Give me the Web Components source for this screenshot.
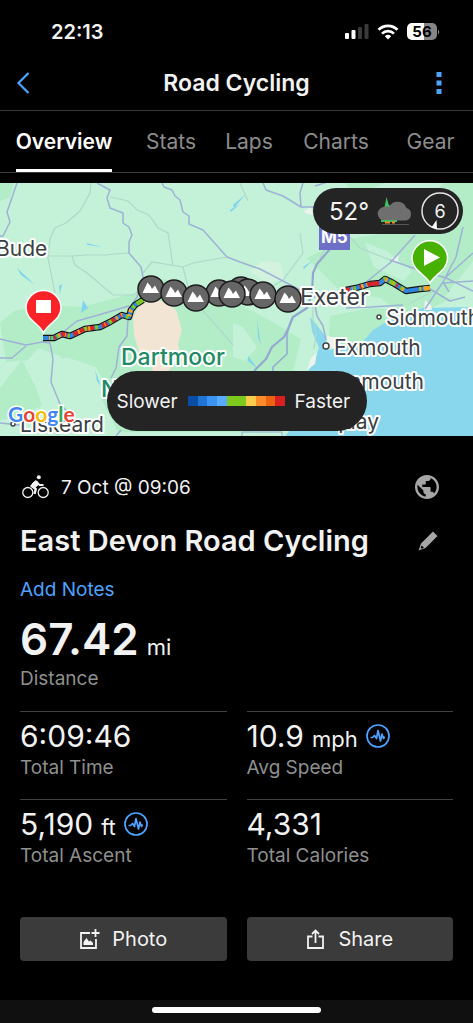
<!DOCTYPE html>
<html lang="en">
<head>
<meta charset="utf-8">
<meta name="viewport" content="width=device-width, initial-scale=1">
<title>Road Cycling</title>
<style>
  body {
    margin: 0;
    background: #000;
    color: #f2f2f2;
    font-family: Inter, "Liberation Sans", sans-serif;
    font-size: 19px;
  }
</style>
</head>
<body>
<activity-page></activity-page>

<script>
function define(name, html) {
  const template = document.createElement("template");
  template.innerHTML = html;

  window.customElements.define(name, class extends HTMLElement {
    constructor() {
      super();
      this.attachShadow({ mode: "open" });
      this.shadowRoot.appendChild(template.content.cloneNode(true));
    }
  });
}

define("status-bar", `
<style>
  :host {
    display: flex;
    align-items: center;
    justify-content: space-between;
    box-sizing: border-box;
    height: 55px;
    padding: 8px 32px 0 51px;
    font-size: 20px;
    font-weight: 600;
  }

  .icons {
    display: flex;
    align-items: center;
    gap: 8px;
  }

  .battery {
    display: flex;
    align-items: center;
  }

  .level {
    width: 30px;
    border-radius: 5px;
    background: linear-gradient(90deg, #fff 56%, #868686 56%);
    color: #000;
    font-size: 15px;
    font-weight: 700;
    line-height: 17px;
    text-align: center;
  }

  svg {
    display: block;
  }
</style>

<time>22:13</time>
<div class="icons">
  <svg width="24" height="16" viewBox="0 0 24 16">
    <rect x="0" y="9" width="4" height="6" rx="1" fill="#fff"/>
    <rect x="6.500" y="6" width="4" height="9" rx="1" fill="#fff"/>
    <rect x="13" y="3" width="4" height="12" rx="1" fill="#3a3a3a"/>
    <rect x="19.500" y="0" width="4" height="15" rx="1" fill="#3a3a3a"/>
  </svg>
  <svg width="22" height="16" viewBox="0 0 22 16" fill="none" stroke="#fff" stroke-width="2.700">
    <path d="M1.500 5.800a13.500 13.500 0 0 1 19 0"/>
    <path d="M5 9.600a8.600 8.600 0 0 1 12 0"/>
    <path d="M7.800 12.200a4.700 4.700 0 0 1 6.400 0L11 15.600z" fill="#fff" stroke="none"/>
  </svg>
  <div class="battery">
    <div class="level">56</div>
    <svg width="4" height="8" viewBox="0 0 4 8"><path d="M1 1.500q2.500 2.500 0 5z" fill="#868686"/></svg>
  </div>
</div>
`);

define("title-bar", `
<style>
  :host {
    display: grid;
    grid-template-columns: 46px 1fr 46px;
    align-items: center;
    height: 55px;
    border-bottom: 1px solid #3a3a3a;
  }

  h1 {
    margin: 0;
    text-align: center;
    font-size: 23px;
    font-weight: 600;
    line-height: 28px;
  }

  button {
    display: flex;
    justify-content: center;
    padding: 0;
    border: 0;
    background: none;
    color: #4ea3ff;
  }

  button:last-child {
    padding-right: 22px;
  }
</style>

<button aria-label="Back">
  <svg width="14" height="22" viewBox="0 0 14 22" fill="none" stroke="currentColor" stroke-width="2.200">
    <path d="M12.500 1L2.500 11l10 10"/>
  </svg>
</button>
<h1><slot></slot></h1>
<button aria-label="More">
  <svg width="6" height="24" viewBox="0 0 6 24" fill="currentColor">
    <path d="M.5 1h5v5h-5zM.5 9.500h5v5h-5zM.5 18h5v5h-5z"/>
  </svg>
</button>
`);

define("tab-bar", `
<style>
  :host {
    display: grid;
    grid-template-columns: 128fr 86fr 70fr 104fr 85fr;
    justify-items: center;
    height: 61px;
    border-bottom: 1px solid #3a3a3a;
  }
</style>
<slot></slot>
`);

define("tab-link", `
<style>
  :host {
    display: flex;
  }

  a {
    box-sizing: border-box;
    padding-top: 18px;
    border-bottom: 3px solid transparent;
    color: #8c8c8c;
    font-size: 21px;
    line-height: 26px;
    text-decoration: none;
  }

  :host([current]) a {
    border-color: #fff;
    color: #fff;
    font-weight: 600;
  }
</style>
<a href="#"><slot></slot></a>
`);

define("weather-pill", `
<style>
  :host {
    display: flex;
    align-items: center;
    justify-content: space-between;
    box-sizing: border-box;
    width: 150px;
    height: 46px;
    padding: 0 4px 0 16px;
    border-radius: 23px;
    background: #242424;
    font-size: 24px;
  }

  svg {
    display: block;
  }

  .wind {
    display: grid;
    place-items: center;
    width: 38px;
    height: 38px;
    font-size: 18px;
  }

  .wind > * {
    grid-area: 1 / 1;
  }
</style>

<span>52°</span>
<svg width="36" height="30" viewBox="0 0 36 30">
  <path d="M6.500 16L9.500 1l2 7 2 3-1 6z" fill="#3fbf62"/>
  <path d="M7 24.500a6.800 6.800 0 0 1-.5-13.500 6 6 0 0 1 5.500 0A9.500 9.500 0 0 1 29.500 12 6.500 6.500 0 0 1 29 24.500z" fill="#6f6f6f"/>
  <path d="M4 24h16v2H4z" fill="#3fbf62"/>
  <path d="M8 25.500h5v2H8zM15 25.500h3v2h-3z" fill="#f58a1f"/>
  <path d="M5 28.500h27" stroke="#555"/>
</svg>
<div class="wind">
  <svg width="38" height="38" viewBox="0 0 38 38">
    <circle cx="19" cy="19" r="18" fill="none" stroke="#e4e4e4" stroke-width="1.500"/>
    <path d="M15.500 28l-5 7.500 5.500 1.500z" fill="#fff"/>
  </svg>
  <span>6</span>
</div>
`);

define("speed-legend", `
<style>
  :host {
    display: grid;
    grid-template-columns: 61px 97px 61px;
    gap: 10px;
    align-items: center;
    box-sizing: border-box;
    width: 260px;
    height: 60px;
    padding-left: 10px;
    border-radius: 30px;
    background: #242424;
    font-size: 19px;
  }

  .scale {
    height: 10px;
    background: linear-gradient(90deg,
      #0a4da2 10%, #1f74d4 10% 20%, #3a94f0 20% 30%, #58abff 30% 40%,
      #7dc91e 40% 60%, #facc4e 60% 70%, #f98b28 70% 80%, #ec6412 80% 90%, #d92020 90%);
  }
</style>
<span>Slower</span>
<div class="scale"></div>
<span>Faster</span>
`);

define("route-map", `
<style>
  :host {
    display: block;
    position: relative;
    margin-top: 10px;
    overflow: hidden;
  }

  svg {
    display: block;
    width: 100%;
  }

  weather-pill {
    position: absolute;
    top: 5px;
    right: 10px;
  }

  speed-legend {
    position: absolute;
    bottom: 5px;
    left: calc(50% - 130px);
  }

  .place {
    fill: #3b4043;
    stroke: #fff;
    stroke-width: 4px;
    stroke-linejoin: round;
    paint-order: stroke;
    font-size: 21px;
  }

  .city {
    font-size: 23px;
  }

  .park {
    fill: #218a64;
    font-size: 23px;
    font-weight: 500;
  }

  .logo {
    stroke: #fff;
    stroke-width: 3px;
    paint-order: stroke;
    font-family: Lato, sans-serif;
    font-size: 21px;
    font-weight: 700;
  }
</style>

<svg viewBox="0 0 473 253" role="img" aria-label="Route map">
  <defs>
    <g id="climb">
      <circle r="13" fill="#666" stroke="#1d1d1d" stroke-width="1.500"/>
      <path d="M-8.500 4L-3.500-6.500-.5-3 1 0 4-3.500 5.500-.5 8 4z" fill="#fff"/>
    </g>
    <path id="west" d="M43 155H54L62 151 70 153 85 146 100 144 110 139 122 132 129 134 131 127 135 122 143 117"/>
    <path id="east" d="M346 107L356 105 370 101 380 100 385 96 393 100 406 108 420 106 430 105"/>
  </defs>

  <rect width="473" height="253" fill="#c3f2d8"/>

  <!-- woodland and moor -->
  <g fill="#b2edc8">
    <path d="M0 0h14l-4 14L0 18z"/>
    <path d="M0 140l14-12 28-6 40 2 45-12 18-4 16-12 18 3 8 14 30 6 28 10 3 30-10 30 20 20-6 40H118l-20-40-20-10-18-26-22-8-10 12-22 2z"/>
    <path d="M0 205l22-28 14 28 6 18-22 10-20 4z"/>
    <path d="M307 75l35-18 50-8 52-49h29v78l-30 38-40 17-22-18-40-6z"/>
    <path d="M233 118l38 20 30 18-8 32h-60z"/>
    <path d="M330 133l40-8 30 2 20-8 35-5-30 14-52 30-28 10-16-14z"/>
    <path d="M345 0h40l-15 6h-20z"/>
  </g>
  <g fill="#c3f2d8">
    <path d="M56 180l10-6 30 10 12 22-14 16-24-6-10-20z"/>
    <path d="M233 140l10 4 14 20-12 14-12-4z"/>
    <path d="M365 60l22 8 25 20-8 10-30-14z"/>
  </g>
  <path d="M133 135l5-11 12-8 16 3 10 8 6 20-4 14 3 14-14 14-12 3-6-14-10-10-5-16z" fill="#f2e5d3"/>
  <path d="M250 88l12-10 18 2 4 16-18 4z" fill="#d3f3df"/>

  <!-- sea and inlets -->
  <path d="M473 124l-50 1-30 10-20 12-12 14-33 6-3-14-9-12-6-7 2 14 7 17-5 13-9 16 6 20-6 18-20 21h188z" fill="#89d7ec"/>
  <g fill="#7fd4ee">
    <path d="M86 60l17 4-15-2zM17 85l18 17-14-10zM62 101l-2 10-1-8zM83 117l5 8-7 5zM95 187l6 16-4-5zM257 137l4 25-3-8zM303 84l9-6-8 8zM230 27l10-6-9 8zM233 22l13-11-12 14zM248 173l10 13-10-8z"/>
  </g>
  <path d="M327 153l10 2 3 8-12 3zM304 28l7-4 2 8-8-2zM311 175l6-6-2 12-8 6zM425 117l6 5 1 5-8 0zM391 76l8-4-2 8z" fill="#edf3ee"/>

  <g fill="none" stroke="#b0d8c9" stroke-width="1.200">
    <path d="M91 0l-1 10-10 18-14 12-11 5-5 11-2 19 7 35M48 73h24l16-1 18 0 8-1 15-1M72 73l3 9 12 8 26 22h20l10-6M110 14l18 4 9 9 12 5 9 13 10 5 5 33M143 90l9-11 31 5 10-4 34-6M183 84l5 20"/>
    <path d="M193 122l10 6 18 20 12 14M300 50l3 20-20 27-13 8M350 54l10 11 30 12M313 122v14l3 15-2 15M240 0l8 18M340 35l-20 40M410 120l30-15"/>
    <path d="M0 156l20 5M40 246l20 6"/>
  </g>
  <g fill="none" stroke="#9fb2d6" stroke-width="1.500" stroke-linejoin="round">
    <path d="M17 0L7 29l3 10-7 14H0M97 0l13 7-3 8 3 10 13 5v10l6 4 3 8-3 7v11l12 14 2 10-6 20-9 13"/>
    <path d="M162 0l2 4 8 3 3 6 5 4 3 12 6 4v8l14 6 24 27 13 5 20 7 23 12 17 9"/>
    <path d="M0 156l26 6 16-3 8 1 3 16-2 23 9 22 8 8 2 20M0 175h12l14-12M0 240l20 2M62 150l15-12 18-5 34-10"/>
    <path d="M128 135l-1 18-8 11-3 21-5 10M116 253l5-6"/>
    <path d="M263 0l3 7 17 6 18 11h14M303 0l-3 10 1 14M315 3l25-8"/>
    <path d="M463 44l-7 30-13 25-10 15-8 12M473 70l-27 24M415 52l-25 28-40 32-38 2M390 77l23 8 33 10 27 13M473 98l-30 2M430 106l20 12 15-4M443 99l6 10"/>
    <path d="M315 122l2 11 6 10 3 14M346 125l25-1 32-2M282 115l20 8 12-2"/>
  </g>
  <g fill="none" stroke="#93a8cf" stroke-width="2.200" stroke-linejoin="round">
    <path d="M330 66l-13 15-4 9-1 20-5 15-14 9-5 12-4 8-12 10-6 12-12 12"/>
    <path d="M306 125l-14 10-5 16 0 20-14 13v8" stroke-width="1.500"/>
  </g>
  <path d="M242 253v-4h40v4" fill="none" stroke="#93a8cf"/>

  <!-- road shield -->
  <path d="M319 40h31v27h-31z" fill="#6e70c8"/>
  <text x="321" y="60" fill="#fff" font-size="17" font-weight="700">M5</text>

  <!-- route: outline, then speed colours -->
  <g fill="none" stroke-linejoin="round">
    <g stroke="#151515" stroke-width="6.500"><use href="#west"/><use href="#east"/></g>
    <g stroke="#2f86e0" stroke-width="4.200"><use href="#west"/><use href="#east"/></g>
    <g stroke="#d92525" stroke-width="4.200">
      <use href="#west" stroke-dasharray="0 11 2 6 6 7 12 2 8 8 6 2 7 6 2 60"/>
      <use href="#east" stroke-dasharray="4 10 2 6 12 6 2 12 2 60"/>
    </g>
    <g stroke="#7dc91e" stroke-width="4.200">
      <use href="#west" stroke-dasharray="0 8 2 4 2 10 2 16 3 8 3 12 3 16 3 10 3 3 9"/>
      <use href="#east" stroke-dasharray="0 8 2 6 2 22 2 4 7 6 3 17 2 3 2"/>
    </g>
    <g stroke="#f9a128" stroke-width="4.200">
      <use href="#west" stroke-dasharray="0 6 1 9 2 5 1 13 2 9 2 15 1 12 2 4 1 8 2 2 3 40"/>
      <use href="#east" stroke-dasharray="0 6 1 9 2 3 1 20 2 6 1 10 2 16 1 3 2"/>
    </g>
  </g>

  <text class="place" x="-4" y="73">Bude</text>
  <text class="place city" x="300" y="122">Exeter</text>
  <text class="place" x="386" y="142">Sidmouth</text>
  <text class="place" x="334" y="172">Exmouth</text>
  <text class="place" x="424" y="206" text-anchor="end">Teignmouth</text>
  <text class="place" x="379" y="246" text-anchor="end">Torquay</text>
  <text class="place" x="20" y="249">Liskeard</text>
  <text class="place park" x="121" y="182">Dartmoor</text>
  <text class="place park" x="101" y="214">National</text>
  <g fill="#fff" stroke="#444" stroke-width="1.500">
    <circle cx="326" cy="163" r="3"/>
    <circle cx="379" cy="134" r="2"/>
    <circle cx="13" cy="241" r="2"/>
  </g>

  <use href="#climb" x="219" y="110"/>
  <use href="#climb" x="241" y="107"/>
  <use href="#climb" x="248" y="109"/>
  <use href="#climb" x="232" y="111"/>
  <use href="#climb" x="263" y="112"/>
  <use href="#climb" x="288" y="116"/>
  <use href="#climb" x="151" y="106"/>
  <use href="#climb" x="174" y="110"/>
  <use href="#climb" x="196" y="115"/>

  <g stroke="#fff" stroke-width="1.500">
    <path d="M43.500 150C40 141 26 137 26 125a17.500 17.500 0 0 1 35 0C61 137 47 141 43.500 150z" fill="#fb2328"/>
    <path d="M430 100C426 92 412 87 412 75.500a17.500 17.500 0 0 1 35.500 0C447.500 87 434 92 430 100z" fill="#47b100"/>
  </g>
  <path d="M36 117h15v13H36zM424 66l16 8.500-16 8.500z" fill="#fff"/>

  <text class="logo" x="8" y="239"><tspan fill="#4285f4">G</tspan><tspan fill="#ea4335">o</tspan><tspan fill="#fbbc05">o</tspan><tspan fill="#4285f4">g</tspan><tspan fill="#34a853">l</tspan><tspan fill="#ea4335">e</tspan></text>
</svg>
<weather-pill></weather-pill>
<speed-legend></speed-legend>
`);

define("activity-header", `
<style>
  :host {
    display: block;
  }

  .row {
    display: flex;
    align-items: center;
    justify-content: space-between;
    height: 54px;
    padding-right: 14px;
  }

  .when {
    display: flex;
    align-items: center;
    gap: 12px;
    padding-left: 2px;
  }

  h2 {
    margin: 0;
    font-size: 29px;
    font-weight: 600;
    line-height: 36px;
    white-space: nowrap;
  }

  button {
    padding: 0;
    border: 0;
    background: none;
    color: #a6a6a6;
  }

  svg {
    display: block;
  }

  a {
    display: block;
    padding: 10px 0;
    color: #4ea3ff;
    line-height: 24px;
    text-decoration: none;
  }
</style>

<div class="row">
  <div class="when">
    <svg width="27" height="24" viewBox="0 0 27 24" fill="none" stroke="#f2f2f2">
      <circle cx="5.800" cy="17.500" r="5" stroke-width="1.300"/>
      <circle cx="21.200" cy="17.500" r="5" stroke-width="1.300"/>
      <circle cx="16.800" cy="2.300" r="2" fill="#f2f2f2" stroke="none"/>
      <path d="M13.500 7L9.500 11l4.300 3-1.300 5" stroke-width="2.400" stroke-linejoin="round"/>
      <path d="M14.500 6.500l3 3.500h4" stroke-width="1.800"/>
      <path d="M10 9l4-3.500 3 3.500-4 3.500z" fill="#f2f2f2"/>
    </svg>
    <slot name="date"></slot>
  </div>
  <button aria-label="Privacy">
    <svg width="24" height="24" viewBox="2 2 20 20" fill="currentColor">
      <path d="M12 2C6.480 2 2 6.480 2 12s4.480 10 10 10 10-4.480 10-10S17.520 2 12 2zm-1 17.930c-3.950-.490-7-3.850-7-7.930 0-.620.080-1.210.210-1.790L9 15v1c0 1.100.900 2 2 2v1.930zm6.900-2.540c-.260-.810-1-1.390-1.900-1.390h-1v-3c0-.550-.450-1-1-1H8v-2h2c.550 0 1-.450 1-1V7h2c1.100 0 2-.900 2-2v-.410c2.930 1.190 5 4.060 5 7.410 0 2.080-.800 3.970-2.100 5.390z"/>
    </svg>
  </button>
</div>
<div class="row">
  <h2><slot name="title"></slot></h2>
  <button aria-label="Edit title">
    <svg width="22" height="22" viewBox="0 0 22 22" fill="currentColor">
      <path fill-rule="evenodd" d="M16 1.500l4.500 4.500L8.500 18l-7 2.500L4 13.500zM4.500 15.500L3.700 18l1 .6 2.300-.9z"/>
    </svg>
  </button>
</div>
<a href="#"><slot name="notes"></slot></a>
`);

define("stat-item", `
<style>
  :host {
    display: block;
    height: 87px;
    border-top: 1px solid #404040;
  }

  :host([hero]) {
    grid-column: 1 / -1;
    height: 99px;
    border-top: 0;
  }

  .value {
    display: flex;
    align-items: baseline;
    gap: 8px;
    padding-top: 4px;
    font-size: 30px;
    line-height: 40px;
  }

  :host([hero]) .value {
    padding: 0;
    font-size: 44px;
    font-weight: 600;
    line-height: 55px;
  }

  ::slotted([slot="unit"]) {
    font-size: 22px;
    font-weight: 400;
    line-height: 24px;
  }

  svg {
    display: none;
    align-self: center;
  }

  :host([graph]) svg {
    display: block;
  }

  .label {
    color: #8f8f8f;
    line-height: 24px;
  }
</style>

<div class="value">
  <span><slot></slot></span>
  <slot name="unit"></slot>
  <svg width="24" height="24" viewBox="0 0 24 24" fill="none" stroke="#4ea3ff" stroke-linejoin="round">
    <circle cx="12" cy="12" r="11" stroke-width="1.700"/>
    <path d="M4.500 13.500h2l2-2 2 3L12 6.500 14.500 17l1.500-7 1.500 4.500 1-2" stroke-width="1.700"/>
  </svg>
</div>
<div class="label"><slot name="label"></slot></div>
`);

define("action-button", `
<style>
  :host {
    display: block;
  }

  button {
    display: flex;
    align-items: center;
    justify-content: center;
    gap: 12px;
    width: 100%;
    height: 44px;
    padding: 0;
    border: 0;
    border-radius: 4px;
    background: #3b3b3b;
    color: #f2f2f2;
    font: inherit;
    font-size: 20px;
  }
</style>
<button><slot name="icon"></slot><slot></slot></button>
`);

define("home-indicator", `
<style>
  :host {
    display: flex;
    justify-content: center;
    height: 23px;
    margin-top: auto;
    background: #101010;
  }

  div {
    width: 169px;
    height: 6px;
    margin-top: 7px;
    border-radius: 3px;
    background: #fff;
  }
</style>
<div></div>
`);

define("activity-page", `
<style>
  :host {
    display: flex;
    flex-direction: column;
    min-height: 100vh;
  }

  main {
    padding: 24px 20px 38px;
  }

  .grid {
    display: grid;
    grid-template-columns: 1fr 1fr;
    column-gap: 20px;
  }

  .actions {
    padding-top: 30px;
  }
</style>

<status-bar></status-bar>
<title-bar>Road Cycling</title-bar>
<tab-bar>
  <tab-link current>Overview</tab-link>
  <tab-link>Stats</tab-link>
  <tab-link>Laps</tab-link>
  <tab-link>Charts</tab-link>
  <tab-link>Gear</tab-link>
</tab-bar>
<route-map></route-map>
<main>
  <activity-header>
    <span slot="date">7 Oct @ 09:06</span>
    <span slot="title">East Devon Road Cycling</span>
    <span slot="notes">Add Notes</span>
  </activity-header>
  <div class="grid">
    <stat-item hero>67.42<span slot="unit">mi</span><span slot="label">Distance</span></stat-item>
    <stat-item>6:09:46<span slot="label">Total Time</span></stat-item>
    <stat-item graph>10.9<span slot="unit">mph</span><span slot="label">Avg Speed</span></stat-item>
    <stat-item graph>5,190<span slot="unit">ft</span><span slot="label">Total Ascent</span></stat-item>
    <stat-item>4,331<span slot="label">Total Calories</span></stat-item>
  </div>
  <div class="grid actions">
    <action-button>
      <svg slot="icon" width="21" height="21" viewBox="0 0 21 21" fill="none" stroke="currentColor" stroke-width="1.800">
        <path d="M11 4H2v15h15v-9M16.500 0v8M12.500 4h8"/>
        <path d="M4.500 16v-3l3-4 2.500 3.500 1.500-1 2.500 2.500v2z" fill="currentColor" stroke="none"/>
      </svg>
      Photo
    </action-button>
    <action-button>
      <svg slot="icon" width="20" height="21" viewBox="0 0 20 21" fill="none" stroke="currentColor" stroke-width="1.800">
        <path d="M6.500 7.500H2V19h15V7.500h-4.500M9.500 14V2M6 5l3.500-3.500L13 5"/>
      </svg>
      Share
    </action-button>
  </div>
</main>
<home-indicator></home-indicator>
`);
</script>
</body>
</html>
